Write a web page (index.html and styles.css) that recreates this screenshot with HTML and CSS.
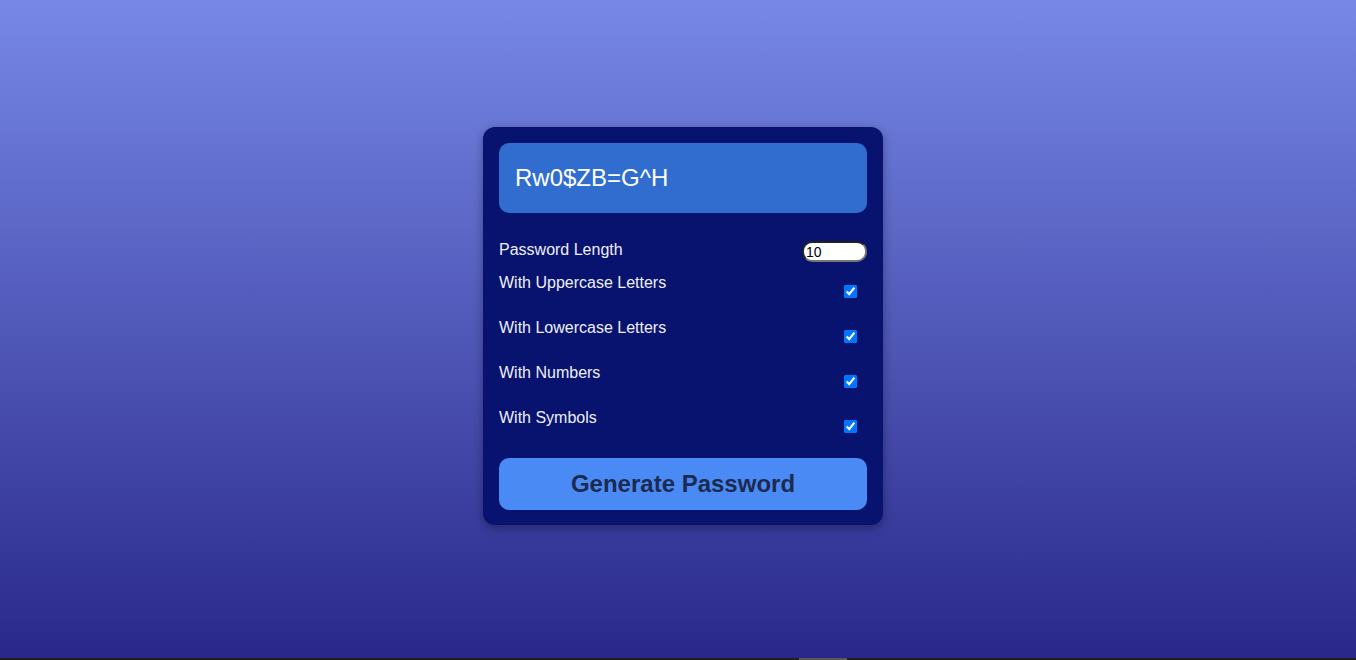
FILE: index.html
```html
<!DOCTYPE html>
<html lang="en">
<head>
<meta charset="UTF-8">
<title>Password Generator</title>
<link rel="stylesheet" href="styles.css">
</head>
<body>
<main class="stage">
  <div class="card">
    <div class="result">Rw0$ZB=G^H</div>
    <div class="settings">
      <div class="setting length">
        <label for="len">Password Length</label>
        <input id="len" class="len-input" type="number" value="10" min="4" max="20">
      </div>
      <div class="setting check">
        <label for="up">With Uppercase Letters</label>
        <input id="up" type="checkbox" checked>
      </div>
      <div class="setting check">
        <label for="low">With Lowercase Letters</label>
        <input id="low" type="checkbox" checked>
      </div>
      <div class="setting check">
        <label for="num">With Numbers</label>
        <input id="num" type="checkbox" checked>
      </div>
      <div class="setting check">
        <label for="sym">With Symbols</label>
        <input id="sym" type="checkbox" checked>
      </div>
    </div>
    <button class="generate" type="button">Generate Password</button>
  </div>
</main>
<div class="hscroll"><div class="thumb"></div></div>
</body>
</html>
```

FILE: styles.css
```css
html, body {
  margin: 0;
  padding: 0;
  height: 100%;
}
body {
  font-family: "Liberation Sans", Arial, sans-serif;
  background: linear-gradient(to bottom, #7788e6 0%, #29288a 100%);
  overflow: hidden;
}
.stage {
  height: 658px;
  box-sizing: border-box;
  padding: 0 0 6px 10px;
  display: flex;
  align-items: center;
  justify-content: center;
}
.card {
  width: 400px;
  box-sizing: border-box;
  padding: 16px 16px 15px;
  background: #08126f;
  border-radius: 12px;
  box-shadow: 0 3px 10px rgba(0, 0, 0, 0.35);
  color: #f0f0f0;
}
.result {
  height: 70px;
  box-sizing: border-box;
  padding: 0 16px;
  display: flex;
  align-items: center;
  background: #306dce;
  border-radius: 10px;
  color: #ffffff;
  font-size: 24px;
}
.settings {
  margin-top: 28px;
}
.setting {
  display: flex;
  justify-content: space-between;
  align-items: flex-start;
  font-size: 16px;
  line-height: 18px;
}
.setting label {
  color: #eef0f8;
}
.setting.length {
  height: 33px;
}
.len-input {
  margin: 0;
  width: 65px;
  height: 21px;
  box-sizing: border-box;
  border-radius: 10px;
  font-family: Arial, "Liberation Sans", sans-serif;
  font-size: 14px;
  padding: 1px 2px;
}
.setting.check {
  height: 45px;
}
.setting.check input {
  margin: 11px 10px 0 0;
  width: 13px;
  height: 13px;
}
.generate {
  display: block;
  width: 100%;
  height: 52px;
  margin-top: 4px;
  border: none;
  border-radius: 10px;
  background: #4a8af4;
  color: #1c2a50;
  font-family: "Liberation Sans", Arial, sans-serif;
  font-size: 24px;
  font-weight: bold;
  cursor: pointer;
}
.hscroll {
  position: fixed;
  left: 0;
  right: 0;
  bottom: 0;
  height: 2px;
  background: #1f1f1f;
}
.hscroll .thumb {
  position: absolute;
  left: 799px;
  width: 48px;
  top: 0;
  bottom: 0;
  background: #5a5a5a;
}
```
